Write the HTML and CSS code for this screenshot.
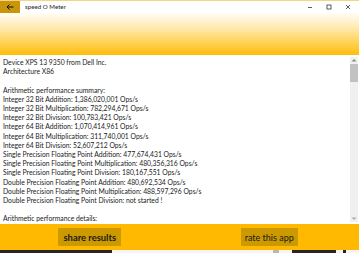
FILE: index.html
```html
<!DOCTYPE html>
<html>
<head>
<meta charset="utf-8">
<link rel="stylesheet" href="styles.css">
</head>
<body>
<div class="window">
  <div class="titlebar">
    <div class="back">
      <svg width="8" height="6" viewBox="0 0 8 6"><path d="M7.5 3H1M3.5 0.5L1 3l2.5 2.5" fill="none" stroke="#111" stroke-width="1"/></svg>
    </div>
    <div class="title">speed O Meter</div>
    <div class="caps">
      <svg class="cap" width="6" height="6" viewBox="0 0 6 6"><path d="M1 3.5h4" stroke="#333" stroke-width="0.8"/></svg>
      <svg class="cap" width="6" height="6" viewBox="0 0 6 6"><rect x="1" y="1" width="4" height="4" fill="none" stroke="#333" stroke-width="0.8"/></svg>
      <svg class="cap" width="6" height="6" viewBox="0 0 6 6"><path d="M1 1l4 4M5 1L1 5" stroke="#333" stroke-width="0.8"/></svg>
    </div>
  </div>
  <div class="header"></div>
  <div class="content">
    <div class="text">
      <div>Device XPS 13 9350 from Dell Inc.</div>
      <div>Architecture X86</div>
      <div>&nbsp;</div>
      <div>Arithmetic performance summary:</div>
      <div>Integer 32 Bit Addition: 1,386,020,001 Ops/s</div>
      <div>Integer 32 Bit Multiplication: 782,294,671 Ops/s</div>
      <div>Integer 32 Bit Division: 100,783,421 Ops/s</div>
      <div>Integer 64 Bit Addition: 1,070,414,961 Ops/s</div>
      <div>Integer 64 Bit Multiplication: 311,740,001 Ops/s</div>
      <div>Integer 64 Bit Division: 52,607,212 Ops/s</div>
      <div>Single Precision Floating Point Addition: 477,674,431 Ops/s</div>
      <div>Single Precision Floating Point Multiplication: 480,356,316 Ops/s</div>
      <div>Single Precision Floating Point Division: 180,167,551 Ops/s</div>
      <div>Double Precision Floating Point Addition: 480,692,534 Ops/s</div>
      <div>Double Precision Floating Point Multiplication: 488,597,296 Ops/s</div>
      <div>Double Precision Floating Point Division: not started !</div>
      <div>&nbsp;</div>
      <div>Arithmetic performance details:</div>
    </div>
    <div class="scrollbar">
      <svg class="arrow" width="6" height="4" viewBox="0 0 6 4"><path d="M0.5 3.5L3 1l2.5 2.5z" fill="#888"/></svg>
      <div class="thumb"></div>
      <div class="track"></div>
      <svg class="arrow" width="6" height="4" viewBox="0 0 6 4"><path d="M0.5 0.5L3 3l2.5-2.5z" fill="#aaa"/></svg>
    </div>
  </div>
  <div class="footer">
    <div class="cell"><button class="btn share">share results</button></div>
    <div class="cell"><button class="btn rate">rate this app</button></div>
  </div>
  <div class="desktop">
    <span class="seg dark" style="width:112px"></span>
    <span class="seg light" style="width:161px"></span>
    <span class="seg grey" style="width:6px"></span>
    <span class="seg light" style="width:13px"></span>
    <span class="seg dark" style="width:44px"></span>
    <span class="seg light" style="width:7px"></span>
    <span class="seg dark" style="width:3px"></span>
    <span class="seg light" style="width:13px"></span>
  </div>
</div>
</body>
</html>
```

FILE: styles.css
```css
* { box-sizing: border-box; }
html, body { margin: 0; padding: 0; }
body {
  width: 359px;
  height: 253px;
  overflow: hidden;
  font-family: Lato, "Open Sans", sans-serif;
  color: #1e1e1e;
  background: #fff;
}
.window {
  display: flex;
  flex-direction: column;
  height: 253px;
}
.titlebar {
  height: 13px;
  display: flex;
  align-items: stretch;
  background: #fff;
  border-top: 1px solid #f3d684;
}
.back {
  width: 20px;
  background: #c9950b;
  display: flex;
  align-items: center;
  justify-content: center;
}
.title {
  margin-left: 5px;
  font-size: 6.2px;
  line-height: 12px;
  color: #222;
}
.caps {
  margin-left: auto;
  display: flex;
  align-items: center;
  gap: 13px;
  padding-right: 8px;
}
.cap { display: block; }
.header {
  height: 42px;
  background: linear-gradient(to bottom, #fffdf6 0%, #ffeab0 35%, #ffd256 70%, #ffbd0a 100%);
}
.content {
  height: 169px;
  display: flex;
  background: #fff;
}
.text {
  flex: 1;
  padding: 3px 0 0 3px;
  font-size: 6.8px;
  line-height: 9.2px;
  white-space: nowrap;
  overflow: hidden;
  color: #222;
}
.scrollbar {
  width: 8px;
  margin: 2px 1px 2px 0;
  background: #f0f0f0;
  display: flex;
  flex-direction: column;
  align-items: center;
}
.arrow { display: block; margin: 1px 0; }
.thumb {
  width: 100%;
  height: 18px;
  background: #c2c2c2;
  margin-top: 1px;
}
.track { flex: 1; }
.footer {
  height: 26px;
  background: #ffb900;
  display: grid;
  grid-template-columns: 1fr 1fr;
}
.cell {
  display: flex;
  justify-content: center;
  padding-top: 4px;
}
.btn {
  height: 18px;
  border: none;
  background: #cc9900;
  color: #1a1a1a;
  font-family: Lato, "Open Sans", sans-serif;
  font-size: 9px;
  padding: 0;
  margin: 0;
  white-space: nowrap;
}
.share { width: 63px; font-weight: 700; font-size: 9.4px; }
.rate { width: 57px; font-weight: 400; }
.desktop {
  height: 3px;
  display: flex;
}
.seg { display: block; height: 3px; }
.dark { background: #2a2520; }
.light { background: #f4f4f4; }
.grey { background: #b8b8b8; }
```
